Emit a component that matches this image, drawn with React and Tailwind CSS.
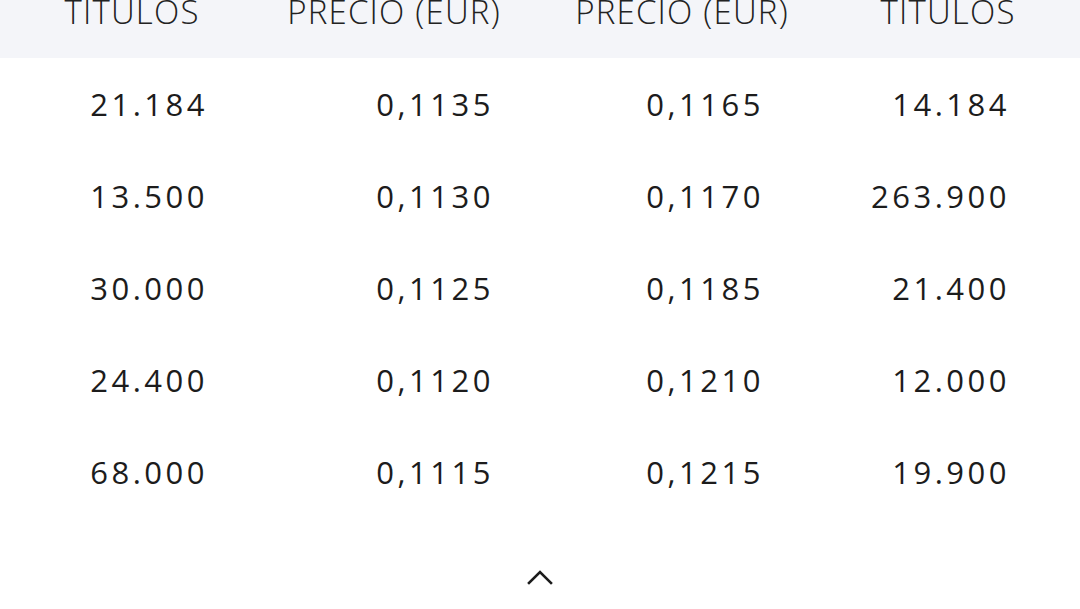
const HEAD = [
  ["TÍTULOS", "pr-[6px]"],
  ["PRECIO (EUR)", "pr-[22px]"],
  ["PRECIO (EUR)", "pl-[14px]"],
  ["TÍTULOS", "pl-[6px]"],
];

const ROWS = [
  ["21.184", "0,1135", "0,1165", "14.184"],
  ["13.500", "0,1130", "0,1170", "263.900"],
  ["30.000", "0,1125", "0,1185", "21.400"],
  ["24.400", "0,1120", "0,1210", "12.000"],
  ["68.000", "0,1115", "0,1215", "19.900"],
];

// padding derecho por columna (los números van alineados a la derecha)
const PAD = ["pr-[62px]", "pr-[46px]", "pr-[46px]", "pr-[70px]"];

export default function App() {
  return (
    <div
      className="w-[1080px] h-[609px] overflow-hidden bg-white text-[#1c1c1c]"
      style={{ fontFamily: "'Open Sans', 'Noto Sans', sans-serif" }}
    >
      {/* cabecera (parcialmente cortada arriba) */}
      <div className="h-[58px] bg-[#f4f5f9] grid grid-cols-4 overflow-hidden">
        {HEAD.map(([h, p], i) => (
          <div key={i} className={`flex justify-center ${p}`}>
            <span className="block -mt-[9px] text-[33px] leading-[42px] font-light tracking-[1.2px] text-[#222]">
              {h}
            </span>
          </div>
        ))}
      </div>

      {/* filas */}
      <div>
        {ROWS.map((r, ri) => (
          <div key={ri} className="grid grid-cols-4 h-[92px] items-center">
            {r.map((v, ci) => (
              <div key={ci} className={`text-right text-[31px] tracking-[3.5px] ${PAD[ci]}`}>
                {v}
              </div>
            ))}
          </div>
        ))}
      </div>

      <div className="flex justify-center pt-[50px]">
        <button aria-label="Contraer" className="text-[#1c1c1c]">
          <svg width="26" height="18" viewBox="0 0 26 18" fill="none">
            <polyline points="2,15 13,4 24,15" stroke="currentColor" strokeWidth="2.6" strokeLinecap="square" />
          </svg>
        </button>
      </div>
    </div>
  );
}
